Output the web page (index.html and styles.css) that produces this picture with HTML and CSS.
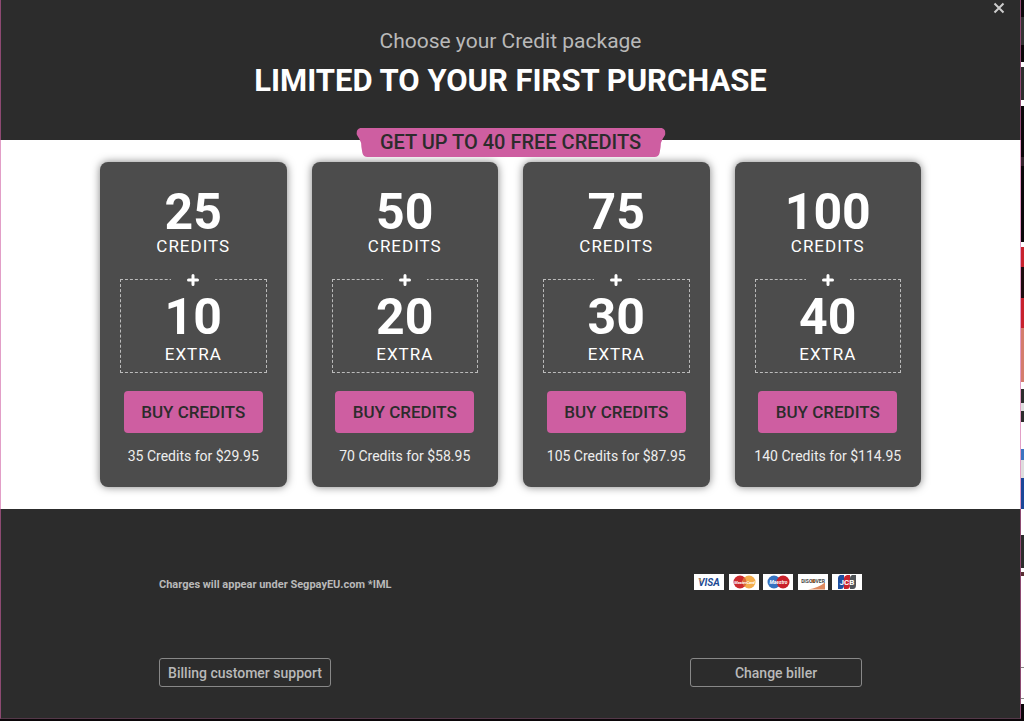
FILE: index.html
```html
<!DOCTYPE html>
<html lang="en">
<head>
    <meta charset="UTF-8">
    <meta name="viewport" content="width=device-width, initial-scale=1.0">
    <title>Buy Credits</title>
    <link rel="stylesheet" href="styles.css">
</head>
<body>
    <div class="modal">
        <header class="modal-header">
            <button class="close-button" type="button" aria-label="Close">
                <svg viewBox="0 0 12 12"><path d="M1.5 1.5l9 9M10.5 1.5l-9 9"/></svg>
            </button>
            <p class="subtitle">Choose your Credit package</p>
            <h1>LIMITED TO YOUR FIRST PURCHASE</h1>
        </header>

        <main class="packages">
            <h2 class="ribbon">
                <svg viewBox="0 0 309 29" preserveAspectRatio="none"><path d="M4 0H305Q309 1 309 6L306 11Q304 14 304 19L303 25Q302 29 298 29H11Q7 29 6 25L5 19Q5 14 3 11L0 6Q0 1 4 0Z"/></svg>
                <span>GET UP TO 40 FREE CREDITS</span>
            </h2>
            <div class="package-list">
                <section class="card">
                    <p class="amount">25</p>
                    <p class="label">CREDITS</p>
                    <div class="extra">
                        <span class="plus"><svg viewBox="0 0 12 12"><path d="M6 1.5v9M1.5 6h9"/></svg></span>
                        <p class="amount">10</p>
                        <p class="label">EXTRA</p>
                    </div>
                    <button class="buy-button" type="button">BUY CREDITS</button>
                    <p class="price">35 Credits for $29.95</p>
                </section>
                <section class="card">
                    <p class="amount">50</p>
                    <p class="label">CREDITS</p>
                    <div class="extra">
                        <span class="plus"><svg viewBox="0 0 12 12"><path d="M6 1.5v9M1.5 6h9"/></svg></span>
                        <p class="amount">20</p>
                        <p class="label">EXTRA</p>
                    </div>
                    <button class="buy-button" type="button">BUY CREDITS</button>
                    <p class="price">70 Credits for $58.95</p>
                </section>
                <section class="card">
                    <p class="amount">75</p>
                    <p class="label">CREDITS</p>
                    <div class="extra">
                        <span class="plus"><svg viewBox="0 0 12 12"><path d="M6 1.5v9M1.5 6h9"/></svg></span>
                        <p class="amount">30</p>
                        <p class="label">EXTRA</p>
                    </div>
                    <button class="buy-button" type="button">BUY CREDITS</button>
                    <p class="price">105 Credits for $87.95</p>
                </section>
                <section class="card">
                    <p class="amount">100</p>
                    <p class="label">CREDITS</p>
                    <div class="extra">
                        <span class="plus"><svg viewBox="0 0 12 12"><path d="M6 1.5v9M1.5 6h9"/></svg></span>
                        <p class="amount">40</p>
                        <p class="label">EXTRA</p>
                    </div>
                    <button class="buy-button" type="button">BUY CREDITS</button>
                    <p class="price">140 Credits for $114.95</p>
                </section>
            </div>
        </main>

        <footer class="modal-footer">
            <div class="footer-row">
                <p class="charges">Charges will appear under SegpayEU.com *IML</p>
                <div class="payment-icons">
                    <svg viewBox="0 0 30 16">
                        <rect width="30" height="16" fill="#fff"/>
                        <text x="15" y="12" font-size="10" fill="#1c4a94">VISA</text>
                        <path d="M4 4.5h2.5l1.5 4z" fill="#e0a040"/>
                    </svg>
                    <svg viewBox="0 0 30 16">
                        <rect width="30" height="16" fill="#fff"/>
                        <circle cx="11" cy="8" r="6.500" fill="#cc2a2e"/>
                        <circle cx="20" cy="8" r="6.500" fill="#f3ac4b"/>
                        <path d="M15.500 3.300a6.500 6.500 0 0 1 0 9.400a6.500 6.500 0 0 1 0-9.400z" fill="#dc6a3c"/>
                        <text x="15.500" y="10" font-size="4" fill="#fff">MasterCard</text>
                    </svg>
                    <svg viewBox="0 0 30 16">
                        <rect width="30" height="16" fill="#fff"/>
                        <circle cx="11" cy="8" r="6.500" fill="#3672c0"/>
                        <circle cx="20" cy="8" r="6.500" fill="#c9202a"/>
                        <text x="15.500" y="10" font-size="5" fill="#fff">Maestro</text>
                    </svg>
                    <svg viewBox="0 0 30 16">
                        <rect width="30" height="16" fill="#fff"/>
                        <path d="M27 8.500V15.500H10Q20 14 27 8.500z" fill="#e08a60"/>
                        <circle cx="15" cy="7" r="2" fill="#e88a3c"/>
                        <text class="upright" x="15" y="9" font-size="5" fill="#444">DISCOVER</text>
                    </svg>
                    <svg viewBox="0 0 30 16">
                        <rect width="30" height="16" fill="#fff"/>
                        <path d="M8 1h4v10q0 4-3 4H6V4q0-2 2-3z" fill="#1f4fa0"/>
                        <path d="M15 1h3v10q0 4-3 4h-3V4q0-2 3-3z" fill="#c8232c"/>
                        <path d="M20 1h4v10q0 4-3 4h-3V4q0-2 2-3z" fill="#505458"/>
                        <text class="upright" x="15" y="10.500" font-size="8" fill="#fff">JCB</text>
                    </svg>
                </div>
            </div>
            <div class="footer-row">
                <button class="outline-button" type="button">Billing customer support</button>
                <button class="outline-button" type="button">Change biller</button>
            </div>
        </footer>
    </div>
</body>
</html>
```
FILE: styles.css
```css
:root {
    --dark: #2c2c2c;
    --card: #4c4c4c;
    --pink: #ce5ea1;
    --light-text: #b9b9b9;
}

* {
    margin: 0;
    padding: 0;
    box-sizing: border-box;
    font-family: Roboto, sans-serif;
}

/* the page behind the modal */
body {
    padding: 0 3px 2px 0;
    background: linear-gradient(
        #0d080b 17px, #333 17px 45px, #0a0608 45px 62px, #fff 62px 67px,
        #2c2c2c 67px 100px, #fff 100px 106px, #0b0609 106px 157px,
        #33232c 157px 166px, #0b0609 166px 242px, #fff 242px 247px,
        #c8202c 247px 267px, #1d0a0d 267px 298px, #c8202c 298px 328px,
        #d47c6c 328px 382px, #fff 382px 389px, #2c2c2c 389px 403px,
        #ddd 403px 411px, #2c2c2c 411px 422px, #fff 422px 449px,
        #3c74c0 449px 460px, #ddd 460px 478px, #1b4698 478px 509px,
        #fff 509px 535px, #2c2c2c 535px 568px, #fff 568px 572px,
        #5a3034 572px 576px, #fff 576px 667px, #888 667px 668px,
        #fff 668px 698px, #888 698px 699px, #fff 699px 704px, #0b0609 704px);
}

.modal {
    background: #fff;
}

.modal-header,
.packages,
.modal-footer {
    border: 0 solid rgba(206, 94, 161, 0.6);
    border-width: 0 1px;
}

.modal-header {
    position: relative;
    padding: 26px 20px 35px;
    background: var(--dark);
    text-align: center;
}

.close-button {
    position: absolute;
    top: 0;
    right: 13px;
    width: 16px;
    height: 16px;
    padding: 2px;
    border: 0;
    background: none;
    cursor: pointer;
}

.close-button svg,
.plus svg {
    display: block;
    width: 12px;
    height: 12px;
    fill: none;
    stroke: #ccc;
    stroke-width: 2;
}

.subtitle {
    color: var(--light-text);
    font-size: 21px;
    line-height: 30px;
}

h1 {
    color: #fff;
    font-size: 31px;
    font-weight: 700;
    line-height: 49px;
}

.packages {
    padding: 22px 20px;
    position: relative;
}

.ribbon {
    position: absolute;
    top: -12px;
    left: 50%;
    transform: translateX(-50%);
    padding: 0 24px;
    color: var(--dark);
    font-size: 20px;
    font-weight: 500;
    line-height: 29px;
    white-space: nowrap;
}

.ribbon svg {
    position: absolute;
    top: 0;
    left: 0;
    width: 100%;
    height: 100%;
    fill: var(--pink);
}

.ribbon span {
    position: relative;
}

.package-list {
    display: grid;
    grid-template-columns: repeat(4, 1fr);
    gap: 25px;
    max-width: 821px;
    margin: 0 auto;
}

.card {
    padding: 25px 20px 21px;
    background: var(--card);
    border-radius: 8px;
    box-shadow: 0 0 8px rgba(0, 0, 0, 0.5);
    color: #fff;
    text-align: center;
}

.amount {
    font-size: 50px;
    font-weight: 700;
    line-height: 51px;
}

.label {
    font-size: 17px;
    line-height: 16px;
    letter-spacing: 1px;
}

.extra {
    position: relative;
    margin-top: 25px;
    padding: 12px 0 10px;
    border: 1px dashed #bbb;
}

.extra .label {
    margin-top: 3px;
}

.plus {
    position: absolute;
    top: -6px;
    left: 50%;
    transform: translateX(-50%);
    padding: 0 16px;
    background: var(--card);
}

.plus svg {
    stroke: #fff;
    stroke-width: 3;
    stroke-linecap: round;
}

.buy-button {
    width: 139px;
    max-width: 100%;
    margin-top: 18px;
    background: var(--pink);
    border: 0;
    border-radius: 4px;
    color: var(--dark);
    font-size: 17px;
    font-weight: 500;
    line-height: 42px;
    cursor: pointer;
}

.price {
    margin: 13px -10px 0;
    font-size: 14px;
    line-height: 20px;
    color: #eee;
}

.modal-footer {
    padding: 65px 20px 31px;
    background: var(--dark);
    border-bottom: 1px solid rgba(206, 94, 161, 0.25);
    color: var(--light-text);
}

.footer-row {
    display: flex;
    justify-content: space-between;
    align-items: flex-start;
    max-width: 703px;
    margin: 0 auto;
}

.footer-row + .footer-row {
    margin-top: 62px;
}

.charges {
    font-size: 11px;
    font-weight: 700;
    line-height: 22px;
}

.payment-icons {
    display: flex;
    justify-content: space-between;
    width: 168px;
}

.payment-icons svg {
    width: 30px;
    height: 16px;
}

.payment-icons text {
    font-weight: 700;
    font-style: italic;
    text-anchor: middle;
}

.payment-icons .upright {
    font-style: normal;
}

.outline-button {
    width: 172px;
    height: 29px;
    background: none;
    border: 1px solid #888;
    border-radius: 3px;
    color: var(--light-text);
    font-size: 14px;
    font-weight: 500;
    cursor: pointer;
}
```
